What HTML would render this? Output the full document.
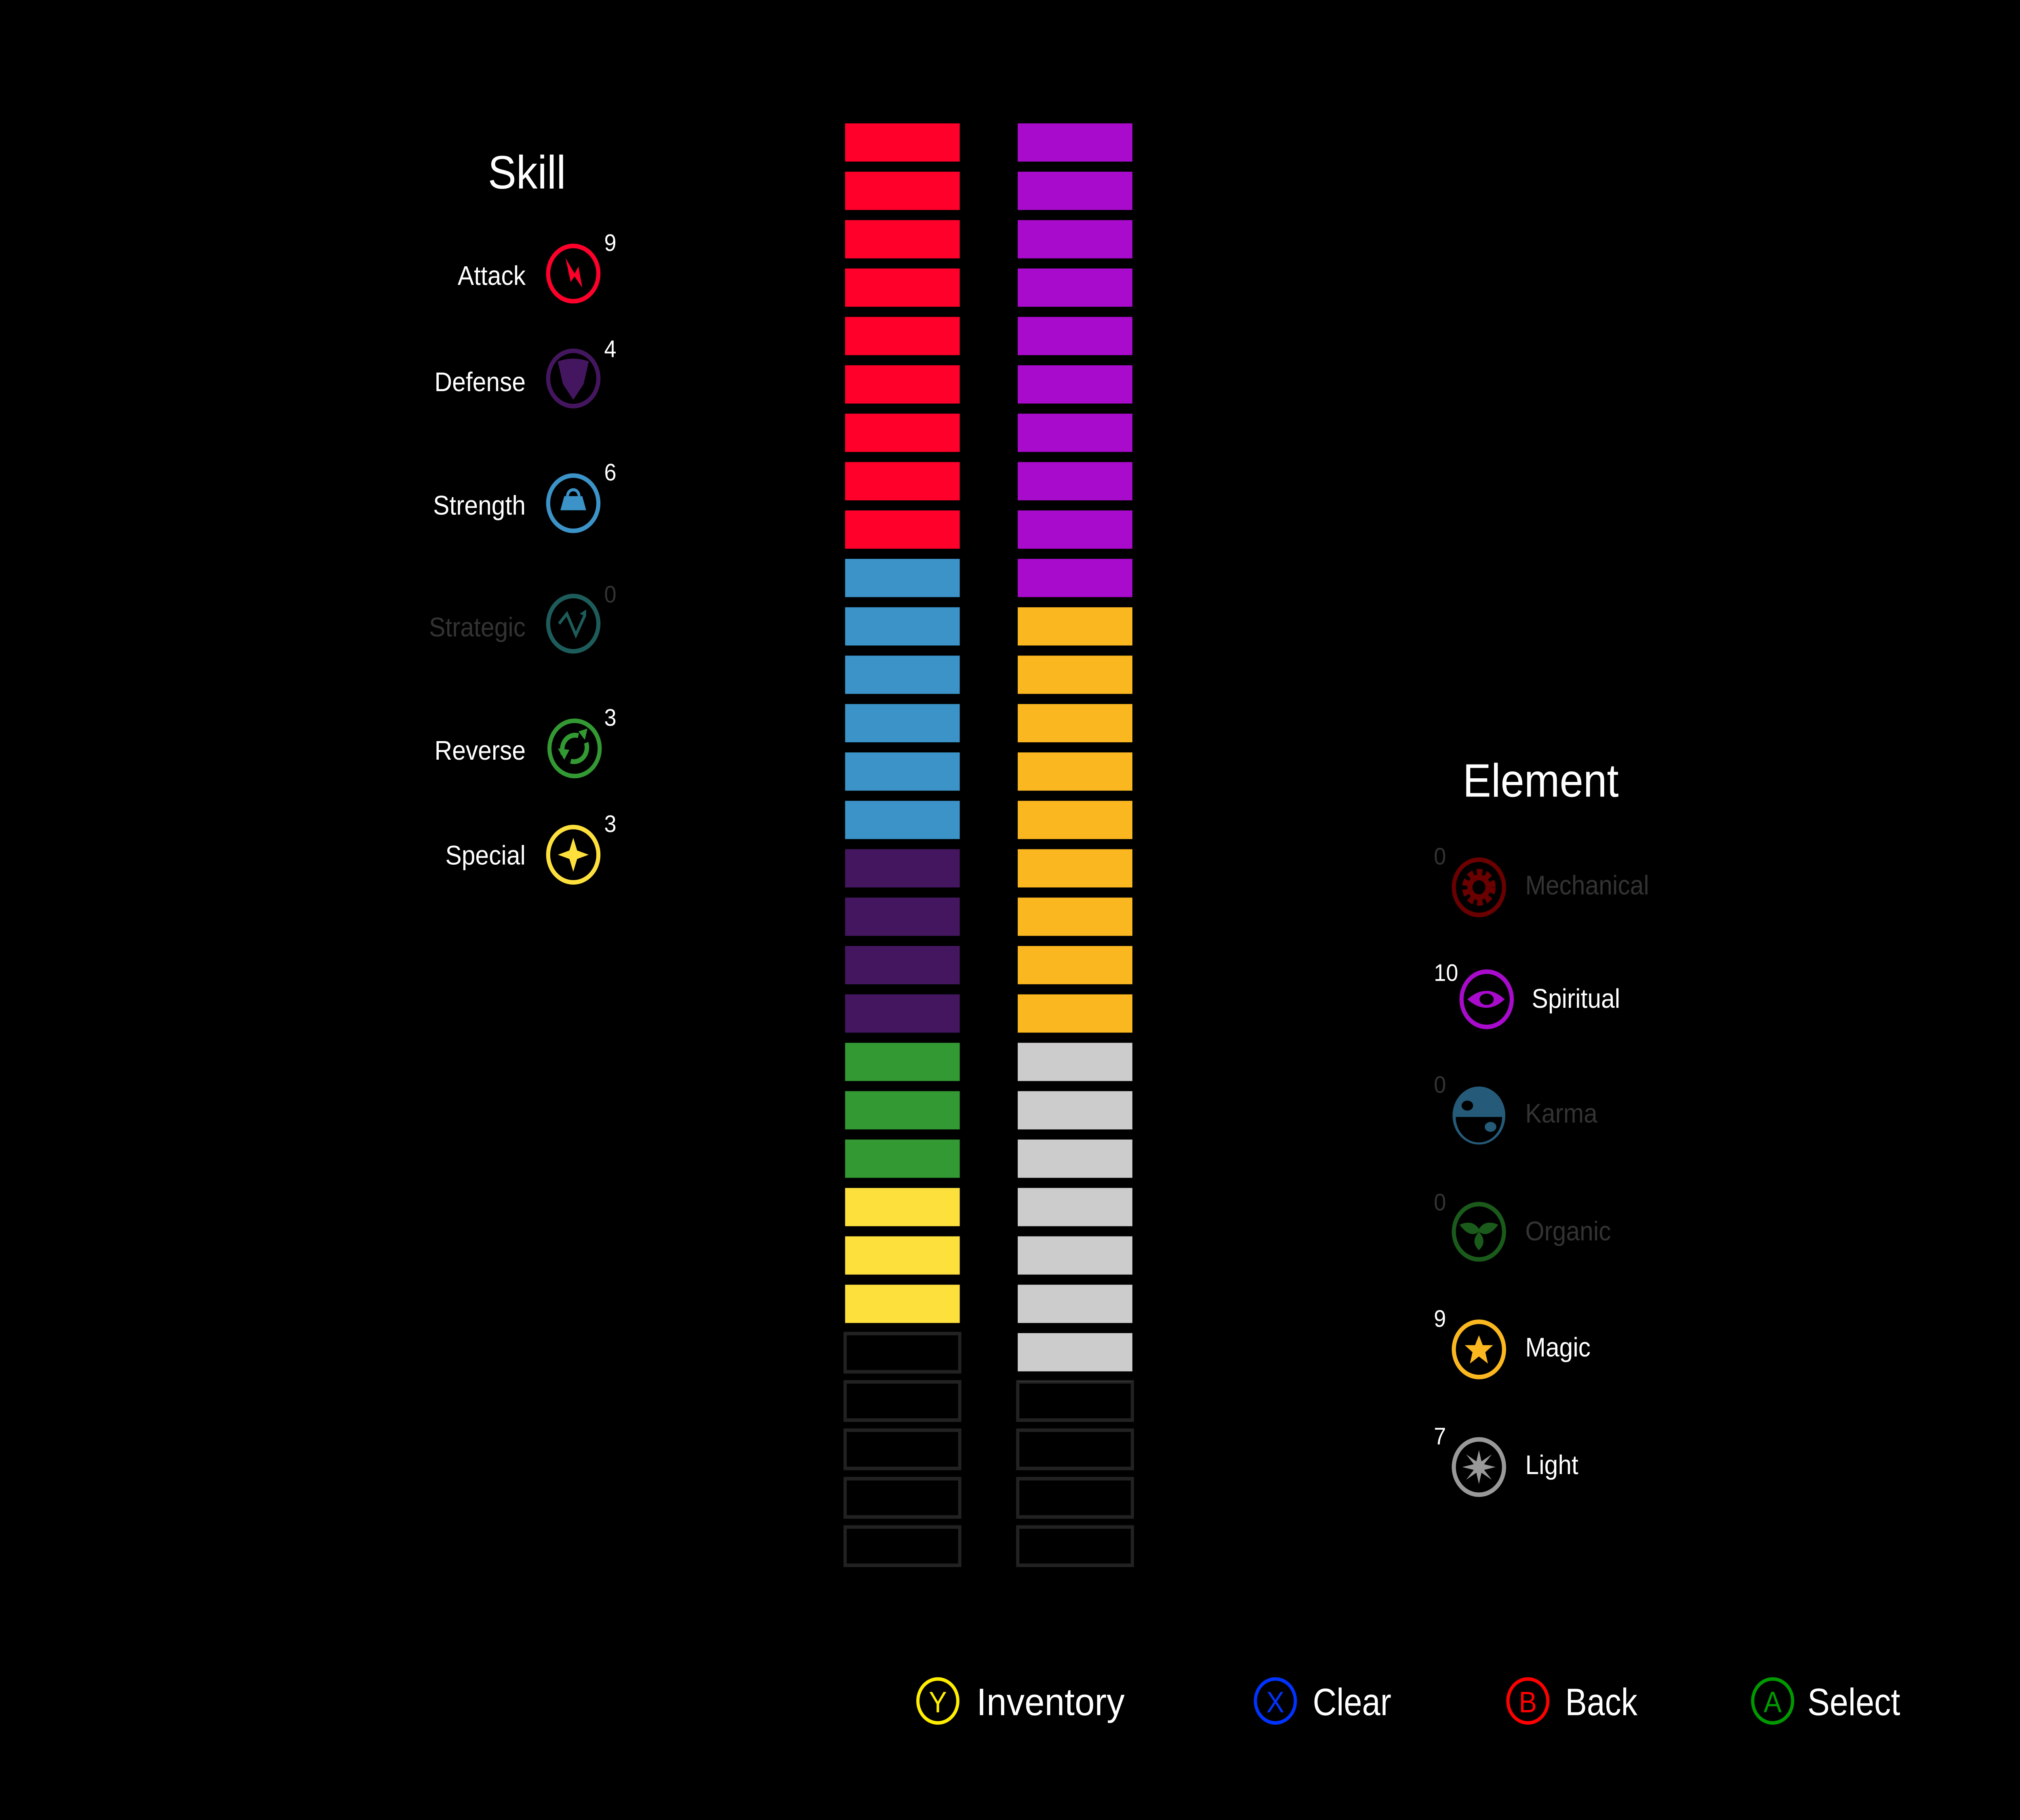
<!DOCTYPE html>
<html><head><meta charset="utf-8"><style>
html,body{margin:0;padding:0;background:#000;overflow:hidden;width:100%;height:100%}
svg{display:block;width:100vw;height:100vh}
text{font-family:"Liberation Sans",sans-serif}
</style></head><body>
<svg viewBox="0 0 1568 1284" preserveAspectRatio="none" xmlns="http://www.w3.org/2000/svg">
<defs>
<pattern id="pr" x="0" y="87" width="1568" height="34.14" patternUnits="userSpaceOnUse"><rect width="1568" height="27" fill="#ff002b"/></pattern>
<pattern id="pb" x="0" y="87" width="1568" height="34.14" patternUnits="userSpaceOnUse"><rect width="1568" height="27" fill="#3b93c8"/></pattern>
<pattern id="pd" x="0" y="87" width="1568" height="34.14" patternUnits="userSpaceOnUse"><rect width="1568" height="27" fill="#451660"/></pattern>
<pattern id="pg" x="0" y="87" width="1568" height="34.14" patternUnits="userSpaceOnUse"><rect width="1568" height="27" fill="#339933"/></pattern>
<pattern id="py" x="0" y="87" width="1568" height="34.14" patternUnits="userSpaceOnUse"><rect width="1568" height="27" fill="#fde03c"/></pattern>
<pattern id="pv" x="0" y="87" width="1568" height="34.14" patternUnits="userSpaceOnUse"><rect width="1568" height="27" fill="#a80bcc"/></pattern>
<pattern id="po" x="0" y="87" width="1568" height="34.14" patternUnits="userSpaceOnUse"><rect width="1568" height="27" fill="#fbb71f"/></pattern>
<pattern id="pw" x="0" y="87" width="1568" height="34.14" patternUnits="userSpaceOnUse"><rect width="1568" height="27" fill="#cccccc"/></pattern>
</defs>
<rect width="1568" height="1284" fill="#000"/>
<rect x="656" y="87" width="89" height="307.2" fill="url(#pr)"/>
<rect x="656" y="394.2" width="89" height="204.9" fill="url(#pb)"/>
<rect x="656" y="599.1" width="89" height="136.6" fill="url(#pd)"/>
<rect x="656" y="735.7" width="89" height="102.4" fill="url(#pg)"/>
<rect x="656" y="838.1" width="89" height="102.4" fill="url(#py)"/>
<g fill="none" stroke="#222" stroke-width="2.5">
<rect x="656" y="940.8" width="89" height="27"/><rect x="656" y="974.9" width="89" height="27"/><rect x="656" y="1009" width="89" height="27"/><rect x="656" y="1043.2" width="89" height="27"/><rect x="656" y="1077.3" width="89" height="27"/>
<rect x="790" y="974.9" width="89" height="27"/><rect x="790" y="1009" width="89" height="27"/><rect x="790" y="1043.2" width="89" height="27"/><rect x="790" y="1077.3" width="89" height="27"/>
</g>
<rect x="790" y="87" width="89" height="341.4" fill="url(#pv)"/>
<rect x="790" y="428.4" width="89" height="307.3" fill="url(#po)"/>
<rect x="790" y="735.7" width="89" height="239" fill="url(#pw)"/>

<text x="409" y="133" font-size="33" fill="#fff" text-anchor="middle">Skill</text>
<g font-size="19" fill="#fff" text-anchor="end">
<text x="408" y="201">Attack</text>
<text x="408" y="276">Defense</text>
<text x="408" y="363">Strength</text>
<text x="408" y="449" fill="#333">Strategic</text>
<text x="408" y="536">Reverse</text>
<text x="408" y="610">Special</text>
</g>
<g font-size="17" fill="#fff">
<text x="469" y="177">9</text><text x="469" y="252">4</text><text x="469" y="339">6</text>
<text x="469" y="425" fill="#333">0</text><text x="469" y="512">3</text><text x="469" y="587">3</text>
</g>
<g fill="none" stroke-width="3.2">
<circle cx="445" cy="193" r="19.5" stroke="#ff002b"/>
<circle cx="445" cy="267" r="19.5" stroke="#451660"/>
<circle cx="445" cy="355" r="19.5" stroke="#3b93c8"/>
<circle cx="445" cy="440" r="19.5" stroke="#1d5c5a"/>
<circle cx="446" cy="528" r="19.5" stroke="#339933"/>
<circle cx="445" cy="603" r="19.5" stroke="#fde03c"/>
</g>
<path d="M439 182 L446 193 L449 188 L452 203 L446 195 L443 199 Z" fill="#ff002b"/>
<path d="M433 255 Q445 251 457 255 L453 271 L445 282 L437 271 Z" fill="#451660"/>
<path d="M438 350 h14 l3 10 h-20 Z" fill="#3b93c8"/><path d="M440.5 350 a4.5 4.5 0 0 1 9 0" fill="none" stroke="#3b93c8" stroke-width="2.2"/>
<path d="M434 440 l6-7 l7 15 l7-14" fill="none" stroke="#1d5c5a" stroke-width="2.2"/><path d="M450 433 l5-3 l0 5 Z" fill="#1d5c5a"/>
<path d="M437 532 a10 10 0 0 1 12-13" fill="none" stroke="#339933" stroke-width="3.5"/><path d="M455 524 a10 10 0 0 1-12 13" fill="none" stroke="#339933" stroke-width="3.5"/>
<path d="M433 528 l5 8 l4-7Z M449 516 l7 -2 l-2 8Z" fill="#339933"/>
<path d="M445 591 L448 600 L457 603 L448 606 L445 615 L442 606 L433 603 L442 600 Z" fill="#fde03c"/>

<text x="1196" y="562" font-size="33" fill="#fff" text-anchor="middle">Element</text>
<g font-size="19" fill="#fff">
<text x="1184" y="631" fill="#333">Mechanical</text>
<text x="1189" y="711">Spiritual</text>
<text x="1184" y="792" fill="#333">Karma</text>
<text x="1184" y="875" fill="#333">Organic</text>
<text x="1184" y="957">Magic</text>
<text x="1184" y="1040">Light</text>
</g>
<g font-size="17" fill="#fff">
<text x="1113" y="610" fill="#333">0</text><text x="1113" y="692">10</text>
<text x="1113" y="771" fill="#333">0</text><text x="1113" y="854" fill="#333">0</text>
<text x="1113" y="936">9</text><text x="1113" y="1019">7</text>
</g>
<g fill="none" stroke-width="3.2">
<circle cx="1148" cy="626" r="19.5" stroke="#6b0000"/>
<circle cx="1154" cy="705" r="19.5" stroke="#a80bcc"/>
<circle cx="1148" cy="869" r="19.5" stroke="#1a5a1a"/>
<circle cx="1148" cy="952" r="19.5" stroke="#fbb71f"/>
<circle cx="1148" cy="1035" r="19.5" stroke="#999"/>
</g>
<circle cx="1148" cy="626" r="10" fill="none" stroke="#6b0000" stroke-width="6" stroke-dasharray="4 2.5"/>
<circle cx="1148" cy="626" r="7" fill="none" stroke="#6b0000" stroke-width="4"/>
<path d="M1139 705 Q1154 693 1168 705 Q1154 717 1139 705Z" fill="#a80bcc"/><ellipse cx="1154" cy="705" rx="5.5" ry="4" fill="#000"/>
<circle cx="1148" cy="787" r="20.5" fill="#255a78"/><path d="M1130 788 h36 a18 18 0 0 1-36 0Z" fill="#000"/>
<ellipse cx="1139" cy="780" rx="4.5" ry="3.5" fill="#000"/><ellipse cx="1157" cy="795" rx="4.5" ry="3.5" fill="#255a78"/>
<path d="M1133 864 Q1143 860 1148 867 Q1153 860 1163 864 Q1155 874 1148 869 Q1141 874 1133 864Z M1148 869 Q1155 876 1148 882 Q1141 876 1148 869Z" fill="#1a5a1a"/>
<path d="M1148 942 L1151 949 L1159 949 L1153 954 L1155 962 L1148 957 L1141 962 L1143 954 L1137 949 L1145 949Z" fill="#fbb71f"/>
<path d="M1148 1023 L1150 1031 L1158 1026 L1152 1033 L1161 1035 L1152 1037 L1158 1044 L1150 1039 L1148 1047 L1146 1039 L1138 1044 L1144 1037 L1135 1035 L1144 1033 L1138 1026 L1146 1031Z" fill="#999"/>

<g fill="none" stroke-width="2.5">
<circle cx="728" cy="1200" r="15.5" stroke="#ffee00"/>
<circle cx="990" cy="1200" r="15.5" stroke="#0033ff"/>
<circle cx="1186" cy="1200" r="15.5" stroke="#ff0000"/>
<circle cx="1376" cy="1200" r="15.5" stroke="#009900"/>
</g>
<g font-size="21" text-anchor="middle">
<text x="728" y="1208" fill="#ffee00">Y</text>
<text x="990" y="1208" fill="#0033ff">X</text>
<text x="1186" y="1208" fill="#ff0000">B</text>
<text x="1376" y="1208" fill="#009900">A</text>
</g>
<g font-size="27" fill="#fff">
<text x="758" y="1210" textLength="115" lengthAdjust="spacingAndGlyphs">Inventory</text>
<text x="1019" y="1210" textLength="61" lengthAdjust="spacingAndGlyphs">Clear</text>
<text x="1215" y="1210" textLength="56" lengthAdjust="spacingAndGlyphs">Back</text>
<text x="1403" y="1210" textLength="72" lengthAdjust="spacingAndGlyphs">Select</text>
</g>
</svg>
</body></html>
